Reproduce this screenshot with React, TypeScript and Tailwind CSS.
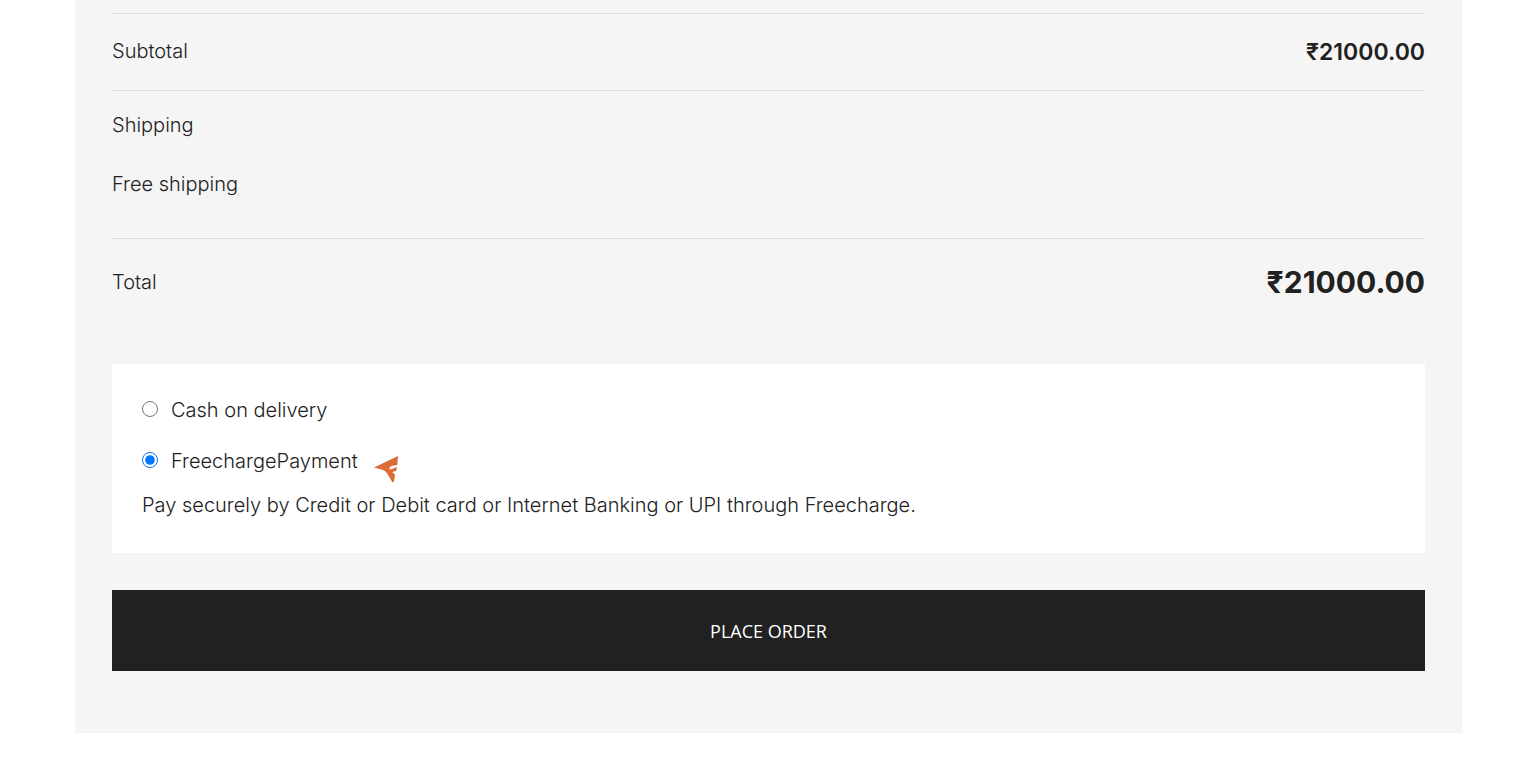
import { useState } from 'react';

interface PaymentMethod {
  id: string;
  title: string;
  description?: string;
  hasIcon?: boolean;
}

const paymentMethods: PaymentMethod[] = [
  { id: 'cod', title: 'Cash on delivery' },
  {
    id: 'freecharge',
    title: 'FreechargePayment',
    description: 'Pay securely by Credit or Debit card or Internet Banking or UPI through Freecharge.',
    hasIcon: true,
  },
];

function FreechargeIcon() {
  return (
    <svg className="ml-4 mt-4 h-7 w-6 shrink-0" viewBox="0 0 24 28" fill="#dc6b35" aria-hidden="true">
      <path d="M24 1 L0 12.5 L9 15 Q12 16 13.5 19 L18.5 27.5 L20 26.5 L21 19.5 L18.5 17.5 L19.5 16.3 L22 16.3 L23 12 L16.5 14.5 L15 13 L17.5 11 L23.2 10 Z" />
    </svg>
  );
}

function OrderTotals() {
  return (
    <table className="w-full border-collapse text-left">
      <tbody>
        <tr className="border-y border-[#dedede]">
          <th scope="row" className="pt-[22px] pb-6 font-light">Subtotal</th>
          <td className="text-right text-[23px] leading-[30px] font-semibold">₹21000.00</td>
        </tr>
        <tr>
          <th scope="row" colSpan={2} className="pt-[19px] font-light">Shipping</th>
        </tr>
        <tr className="border-b border-[#dedede]">
          <td colSpan={2} className="pt-[29px] pb-[39px]">Free shipping</td>
        </tr>
        <tr>
          <th scope="row" className="py-7 font-light">Total</th>
          <td className="text-right text-3xl leading-[30px] font-bold">₹21000.00</td>
        </tr>
      </tbody>
    </table>
  );
}

export default function App() {
  const [selected, setSelected] = useState<string>('freecharge');

  const active = paymentMethods.find((method) => method.id === selected);

  return (
    <main className="bg-white pr-[59px] pl-[75px] font-['Inter',sans-serif] text-xl leading-[30px] font-light text-[#212121]">
      <form
        className="bg-[#f5f5f5] px-[37px] pt-[13px] pb-[62px]"
        onSubmit={(e) => e.preventDefault()}
      >
        <OrderTotals />

        {/* Payment methods */}
        <div className="mt-[39px] bg-white px-[30px] pt-[31px] pb-[33px]">
          <div className="flex flex-col gap-[21px]">
            {paymentMethods.map((method) => (
              <div key={method.id} className="flex h-[30px] items-center">
                <input
                  type="radio"
                  id={method.id}
                  name="payment_method"
                  className="mb-0.5 size-4 shrink-0"
                  checked={selected === method.id}
                  onChange={() => setSelected(method.id)}
                />
                <label htmlFor={method.id} className="ml-[13px] flex items-center">
                  {method.title}
                  {method.hasIcon && <FreechargeIcon />}
                </label>
              </div>
            ))}
          </div>
          {active?.description && <p className="mt-3.5">{active.description}</p>}
        </div>

        <button
          type="submit"
          className="mt-[37px] block w-full bg-[#212121] pt-7 pb-[26px] font-['Open_Sans',sans-serif] text-lg leading-[27px] font-normal text-white uppercase"
        >
          Place order
        </button>
      </form>
    </main>
  );
}
